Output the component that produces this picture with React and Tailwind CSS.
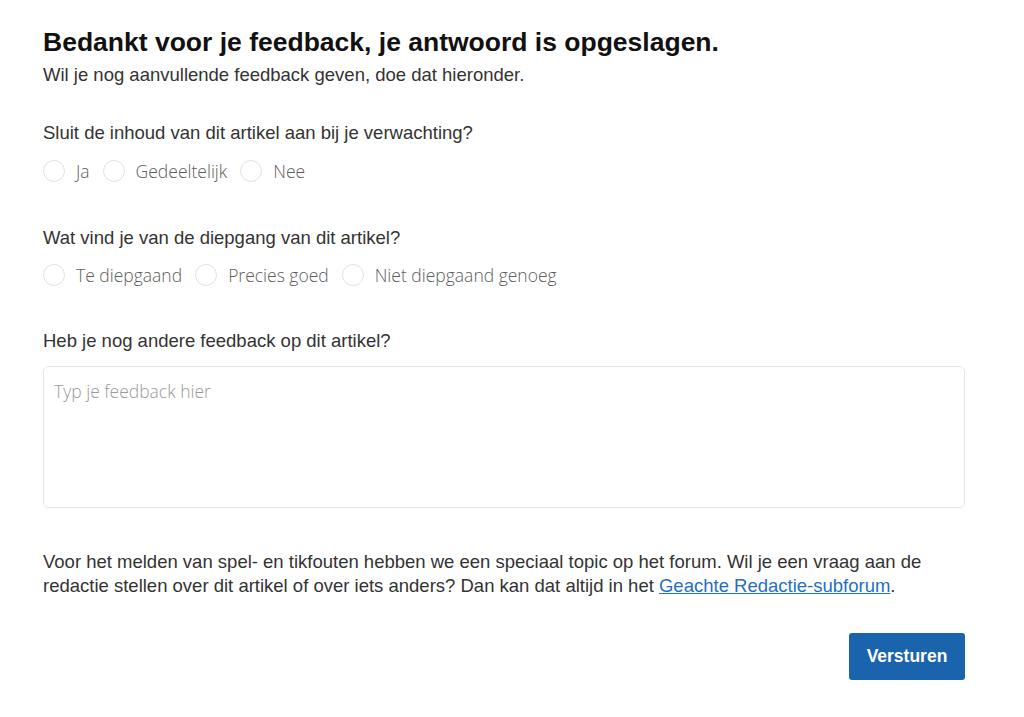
import React, { useState } from "react";

const QUESTIONS = [
  {
    id: "verwachting",
    label: "Sluit de inhoud van dit artikel aan bij je verwachting?",
    options: ["Ja", "Gedeeltelijk", "Nee"],
  },
  {
    id: "diepgang",
    label: "Wat vind je van de diepgang van dit artikel?",
    options: ["Te diepgaand", "Precies goed", "Niet diepgaand genoeg"],
  },
];

function RadioGroup({ name, options, value, onChange, className }) {
  return (
    <div className={"flex items-center h-[22px] " + className}>
      {options.map((opt) => (
        <label key={opt} className="flex items-center cursor-pointer mr-[13px]">
          <input
            type="radio"
            name={name}
            checked={value === opt}
            onChange={() => onChange(opt)}
            className="appearance-none w-[22px] h-[22px] rounded-full border border-[#dfe3e7] bg-white checked:border-[6px] checked:border-[#1a64ad] m-0"
          />
          <span className="ml-[11px] text-[17.5px] leading-[22px] font-light text-[#5c5c5c] font-['Open_Sans',sans-serif]">
            {opt}
          </span>
        </label>
      ))}
    </div>
  );
}

export default function App() {
  const [answers, setAnswers] = useState({});
  const [text, setText] = useState("");

  return (
    <div className="min-h-screen bg-white font-['Liberation_Sans',Arial,sans-serif]">
      <div className="w-[922px] ml-[43px] pt-[26px]">
        <h1 className="text-[26.5px] leading-[32px] font-bold text-[#111]">
          Bedankt voor je feedback, je antwoord is opgeslagen.
        </h1>
        <p className="mt-[5px] text-[18.5px] leading-[24px] text-[#333]">
          Wil je nog aanvullende feedback geven, doe dat hieronder.
        </p>

        {QUESTIONS.map((q, i) => (
          <div key={q.id} className={i === 0 ? "mt-[34px]" : "mt-[44px]"}>
            <p className="text-[18.5px] leading-[24px] text-[#333]">{q.label}</p>
            <RadioGroup
              name={q.id}
              options={q.options}
              value={answers[q.id]}
              onChange={(v) => setAnswers({ ...answers, [q.id]: v })}
              className={i === 0 ? "mt-[15px]" : "mt-[14px]"}
            />
          </div>
        ))}

        <div className="mt-[43px]">
          <p className="text-[18.5px] leading-[24px] text-[#333]">
            Heb je nog andere feedback op dit artikel?
          </p>
          <textarea
            value={text}
            onChange={(e) => setText(e.target.value)}
            placeholder="Typ je feedback hier"
            className="block mt-[13px] w-full h-[142px] resize-none rounded-[5px] border border-[#e3e6ea] px-[10px] py-[12px] text-[17.5px] leading-[24px] font-light text-[#333] placeholder:text-[#999] font-['Open_Sans',sans-serif] outline-none"
          />
        </div>

        <p className="mt-[42px] text-[18.5px] leading-[24px] text-[#333]">
          Voor het melden van spel- en tikfouten hebben we een speciaal topic op het forum. Wil je een vraag aan de redactie stellen over dit artikel of over iets anders? Dan kan dat altijd in het{" "}
          <a href="#" className="text-[#1f70c1] underline">
            Geachte Redactie-subforum
          </a>
          .
        </p>

        <div className="flex justify-end mt-[35px]">
          <button className="w-[116px] h-[47px] rounded-[3px] bg-[#1a64ad] text-white font-bold text-[17.5px]">
            Versturen
          </button>
        </div>
      </div>
    </div>
  );
}
